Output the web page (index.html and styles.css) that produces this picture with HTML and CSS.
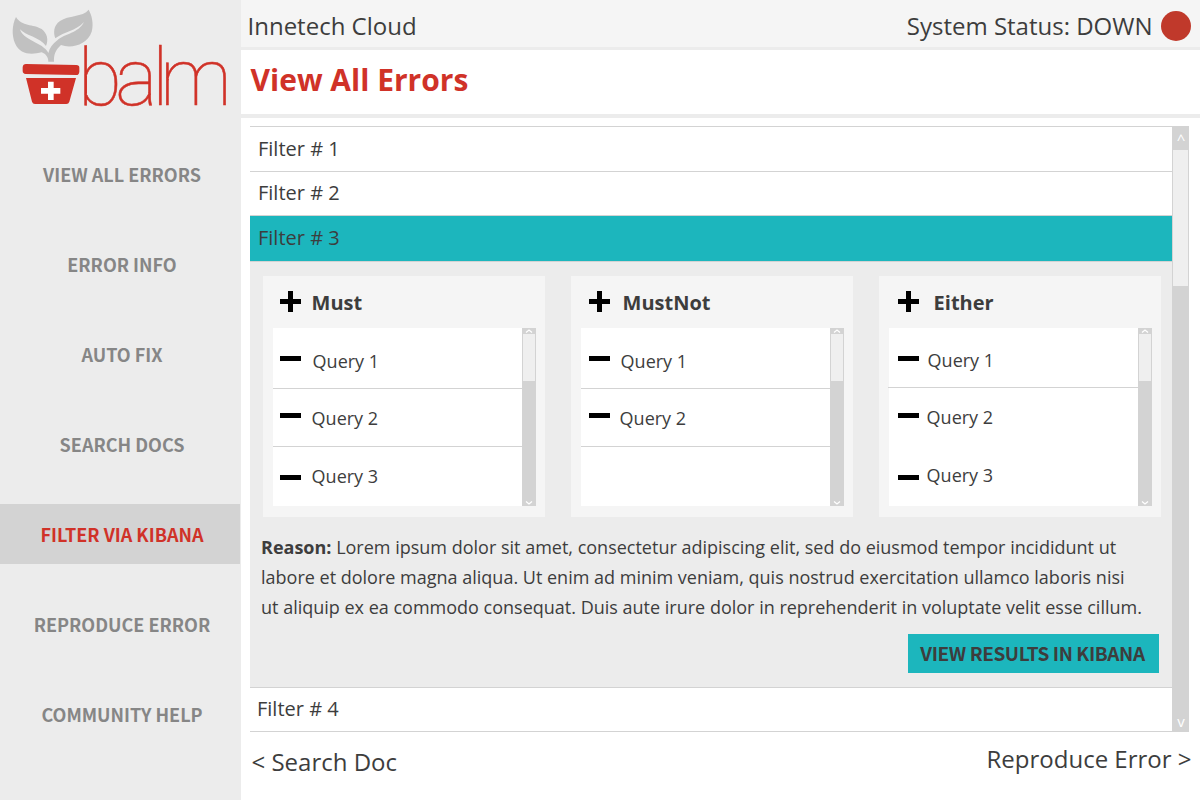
FILE: index.html
```html
<!DOCTYPE html>
<html lang="en">
<head>
<meta charset="utf-8">
<title>Balm - View All Errors</title>
<link rel="stylesheet" href="styles.css">
</head>
<body>
<div class="app">
  <aside class="sidebar">
    <svg class="logo" viewBox="0 0 720 360" role="img" aria-label="balm">
      <path class="leaf" d="M145 185H162C161 165 166 150 183 135C215 147 262 133 275 95C282 70 275 45 266 29C248 52 205 45 180 63C160 77 160 98 166 115C195 93 225 95 252 66C235 100 195 100 172 121C158 132 149 143 145 159C138 143 115 132 98 123C80 113 65 105 60 88C75 106 120 112 138 138C146 120 142 100 125 87C100 72 65 80 48 51C36 75 35 105 45 130C60 165 95 165 125 157C138 162 145 172 145 185Z"/>
      <path class="pot" d="M78 192L229 195Q238 196 238 203V215Q237 225 229 225L77 222Q68 221 68 213V202Q69 192 78 192ZM78 234H228L208 305Q206 312 199 312H105Q98 312 96 305Z"/>
      <path class="cross" d="M144 245H161V264H181V281H161V300H144V281H123V264H144Z"/>
      <text class="wordmark" x="234 346 456 480" y="316">balm</text>
    </svg>
    <nav class="nav">
      <a class="nav-item">VIEW ALL ERRORS</a>
      <a class="nav-item">ERROR INFO</a>
      <a class="nav-item">AUTO FIX</a>
      <a class="nav-item">SEARCH DOCS</a>
      <a class="nav-item active">FILTER VIA KIBANA</a>
      <a class="nav-item">REPRODUCE ERROR</a>
      <a class="nav-item">COMMUNITY HELP</a>
    </nav>
  </aside>
  <main class="main">
    <header class="topbar">
      <span class="tenant">Innetech Cloud</span>
      <span class="status">System Status: DOWN<i class="status-dot"></i></span>
    </header>
    <div class="titlebar"><h1 class="title">View All Errors</h1></div>
    <section class="list">
      <div class="filters">
        <div class="filter">Filter # 1</div>
        <div class="filter second">Filter # 2</div>
        <div class="filter selected">Filter # 3</div>
        <div class="detail">
          <div class="cards">
            <div class="card must">
              <h2 class="card-head"><svg class="plus" viewBox="0 0 21 21"><path d="M8 0h5v8h8v5h-8v8H8v-8H0V8h8z"/></svg><span>Must</span></h2>
              <div class="box">
                <ul class="queries">
                  <li class="query"><i class="minus"></i><span>Query 1</span></li>
                  <li class="query"><i class="minus"></i><span>Query 2</span></li>
                  <li class="query"><i class="minus"></i><span>Query 3</span></li>
                </ul>
                <div class="bar small"><svg class="arrow" viewBox="0 0 8 4"><path d="M1 3.5L4 1l3 2.5"/></svg><i class="thumb"></i><svg class="arrow" viewBox="0 0 8 4"><path d="M1 .5L4 3l3-2.5"/></svg></div>
              </div>
            </div>
            <div class="card mustnot">
              <h2 class="card-head"><svg class="plus" viewBox="0 0 21 21"><path d="M8 0h5v8h8v5h-8v8H8v-8H0V8h8z"/></svg><span>MustNot</span></h2>
              <div class="box">
                <ul class="queries">
                  <li class="query"><i class="minus"></i><span>Query 1</span></li>
                  <li class="query"><i class="minus"></i><span>Query 2</span></li>
                </ul>
                <div class="bar small"><svg class="arrow" viewBox="0 0 8 4"><path d="M1 3.5L4 1l3 2.5"/></svg><i class="thumb"></i><svg class="arrow" viewBox="0 0 8 4"><path d="M1 .5L4 3l3-2.5"/></svg></div>
              </div>
            </div>
            <div class="card either">
              <h2 class="card-head"><svg class="plus" viewBox="0 0 21 21"><path d="M8 0h5v8h8v5h-8v8H8v-8H0V8h8z"/></svg><span>Either</span></h2>
              <div class="box">
                <ul class="queries">
                  <li class="query"><i class="minus"></i><span>Query 1</span></li>
                  <li class="query"><i class="minus"></i><span>Query 2</span></li>
                  <li class="query"><i class="minus"></i><span>Query 3</span></li>
                </ul>
                <div class="bar small"><svg class="arrow" viewBox="0 0 8 4"><path d="M1 3.5L4 1l3 2.5"/></svg><i class="thumb"></i><svg class="arrow" viewBox="0 0 8 4"><path d="M1 .5L4 3l3-2.5"/></svg></div>
              </div>
            </div>
          </div>
          <p class="reason"><b>Reason:</b> Lorem ipsum dolor sit amet, consectetur adipiscing elit, sed do eiusmod tempor incididunt ut<br>labore et dolore magna aliqua. Ut enim ad minim veniam, quis nostrud exercitation ullamco laboris nisi<br>ut aliquip ex ea commodo consequat. Duis aute irure dolor in reprehenderit in voluptate velit esse cillum.</p>
          <button class="results">VIEW RESULTS IN KIBANA</button>
        </div>
        <div class="filter last">Filter # 4</div>
      </div>
      <div class="bar large"><span class="caret up">^</span><i class="thumb"></i><span class="caret down">v</span></div>
    </section>
    <footer class="pager">
      <a class="prev">&lt; Search Doc</a>
      <a class="next">Reproduce Error &gt;</a>
    </footer>
  </main>
</div>
</body>
</html>
```
FILE: styles.css
```css
* { box-sizing: border-box; }
body { margin: 0; background: #fff; color: #3d3d3d; font-family: "Open Sans", "Noto Sans", sans-serif; }
.app { display: flex; width: 1200px; height: 800px; overflow: hidden; }

.sidebar { width: 241px; height: 800px; background: #ececec; }
.logo { display: block; width: 240px; height: 120px; overflow: visible; }
.leaf { fill: #c1c1c1; }
.pot { fill: #d03228; }
.cross { fill: #fff; }
.wordmark { fill: #d03228; stroke: #d03228; stroke-width: 1.6px; font-family: Roboto, sans-serif; font-weight: 100; font-size: 240px; }
.nav { display: flex; flex-direction: column; gap: 30px; width: 240px; padding-top: 24px; }
.nav-item { display: flex; align-items: center; justify-content: center; height: 60px; padding: 0 0 1px 4px; color: #868686; font: 700 18px/24px "Noto Sans CJK SC", sans-serif; white-space: nowrap; }
.nav-item.active { background: #d3d3d3; color: #d03228; }

.main { width: 959px; display: flex; flex-direction: column; }
.topbar { display: flex; justify-content: space-between; height: 50px; padding: 9px 9px 0 6.5px; background: #f5f5f5; border-bottom: 3px solid #ececec; font-size: 24px; line-height: 34px; }
.status { display: flex; gap: 8.5px; }
.status-dot { width: 30px; height: 30px; margin-top: 2px; border-radius: 50%; background: #c0392b; }
.titlebar { height: 68px; padding: 10px 0 0 9.5px; border-bottom: 4px solid #ececec; }
.title { margin: 0; color: #d03228; font-size: 30px; line-height: 40px; font-weight: 700; }

.list { display: flex; height: 606px; margin: 8px 0 0 9px; }
.filters { width: 922px; border-bottom: 1px solid #d3d3d3; }
.filter { height: 45px; padding: 8px 8px 0; border-top: 1px solid #d3d3d3; font-size: 20px; line-height: 28px; }
.filter.second { height: 44px; padding-top: 7px; }
.filter.selected { height: 46px; background: #1cb6bd; }
.filter.last { height: 44px; padding: 7px 7px 0; }
.detail { height: 426px; padding: 14px 11px 0; background: #ececec; border-top: 1px solid #d3d3d3; display: flex; flex-direction: column; }
.cards { display: flex; gap: 26px; padding-left: 2px; }
.card { width: 282px; height: 241px; padding-left: 10px; background: #f5f5f5; }
.card-head { display: flex; margin: 0; height: 52px; padding: 13px 0 0 7px; font-size: 20px; line-height: 28px; font-weight: 700; }
.plus { width: 21px; height: 21px; margin: 2px 10.6px 0 0; flex: none; }
.box { display: flex; width: 263px; height: 178px; background: #fff; }
.queries { width: 249px; margin: 0; padding: 0; list-style: none; }
.query { display: flex; height: 61px; padding: 21px 0 0 7px; border-bottom: 1px solid #d3d3d3; font-size: 18px; line-height: 24px; }
.query:nth-child(2) { height: 58px; padding-top: 17px; }
.query:nth-child(3) { height: 59px; padding-top: 17px; border-bottom: 0; }
.query span { margin-left: -0.4px; }
.minus { width: 21px; height: 5px; margin: 7px 11px 0 0; background: #000; flex: none; }
.query:nth-child(3) .minus { margin-top: 11px; }
.query:nth-child(1) .minus { margin-right: 12px; }
.mustnot .card-head, .mustnot .query { padding-left: 8px; }
.mustnot .plus { margin-right: 12.6px; }
.mustnot .minus { margin-right: 10px; }
.mustnot .query:nth-child(1) .minus { margin-right: 11px; }
.either .card-head, .either .query { padding-left: 9px; }
.either .plus { margin-right: 14.6px; }
.either .minus { margin-top: 8px; margin-right: 8px; }
.either .query:nth-child(1) { height: 60px; padding-top: 20px; margin-left: -1px; padding-left: 10px; }
.either .query:nth-child(1) .minus { margin-right: 9px; }
.either .query:nth-child(2) { border-bottom-color: transparent; }
.either .query:nth-child(3) .minus { margin-top: 12px; }

.bar { display: flex; flex-direction: column; align-items: center; background: #d3d3d3; }
.thumb { background: #efefef; }
.small { width: 14px; justify-content: space-between; }
.small .thumb { width: 12px; height: 47px; margin-bottom: auto; }
.arrow { width: 8px; height: 4px; margin: 1px 0; fill: none; stroke: #fff; stroke-width: 1.3; }
.large { width: 17px; height: 606px; color: #fff; font-size: 15px; line-height: 24px; }
.large .thumb { width: 15px; height: 136px; }
.caret { height: 24px; padding-left: 1px; }
.caret.up { line-height: 27px; }
.caret.down { margin-top: auto; line-height: 26px; }

.reason { margin: 15px 0 0; font-size: 18px; line-height: 30px; white-space: nowrap; }
.results { align-self: flex-end; width: 251px; height: 39px; margin: 12px 2px 0 0; padding: 0 2px 2px 0; border: 0; background: #1cb6bd; color: #3d3d3d; font: 700 19px/24px "Noto Sans CJK SC", sans-serif; letter-spacing: -0.42px; white-space: nowrap; }

.pager { display: flex; justify-content: space-between; padding: 10px 8.5px 0 10.5px; font-size: 24px; line-height: 34px; }
.prev { padding-top: 3px; }
```
